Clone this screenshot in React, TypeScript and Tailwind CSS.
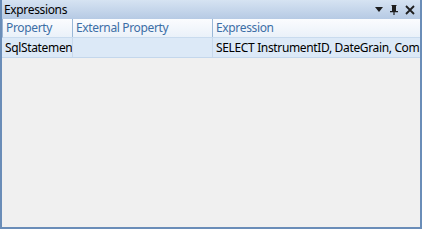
import React from 'react';

const font = { fontFamily: '"Noto Sans", "Open Sans", sans-serif' };

export default function App() {
  return (
    <div
      className="w-[422px] h-[229px] flex flex-col bg-[#f0f0f0] border-2 border-t-0 border-[#6a8db8] overflow-hidden text-[12px] tracking-[-0.35px]"
      style={font}
    >
      {/* title bar */}
      <div className="h-[19px] flex items-center pl-[2px] pr-[5px] bg-gradient-to-b from-[#d6e3f2] to-[#b6cae4] text-black shrink-0">
        <span className="leading-none">Expressions</span>
        <div className="ml-auto flex items-center gap-[7px] text-[#1e1e1e]">
          <svg width="8" height="5" viewBox="0 0 8 5"><path d="M0 0h8L4 5z" fill="currentColor" /></svg>
          <svg width="8" height="10" viewBox="0 0 8 10">
            <path d="M1.5 0h5v1H6v5h2v1.2H4.6V10H3.4V7.2H0V6h2V1h-.5z" fill="currentColor" />
          </svg>
          <svg width="10" height="10" viewBox="0 0 10 10">
            <path d="M1 1l8 8M9 1L1 9" stroke="currentColor" strokeWidth="1.8" />
          </svg>
        </div>
      </div>

      {/* header row */}
      <div className="h-[19px] flex shrink-0 bg-gradient-to-b from-[#fbfcfe] to-[#eaf1f9] border-b border-[#c9dbee] text-[#3c6ea6] border-l border-l-[#9bb5d4]">
        <div className="w-[70px] flex items-center pl-[3px] border-r border-[#9ab8d8] whitespace-nowrap overflow-hidden">Property</div>
        <div className="w-[140px] flex items-center pl-[3px] border-r border-[#9ab8d8] whitespace-nowrap overflow-hidden">External Property</div>
        <div className="flex-1 flex items-center pl-[3px] whitespace-nowrap overflow-hidden">Expression</div>
      </div>

      {/* data row */}
      <div className="h-[20px] flex shrink-0 bg-[#dce9f7] border-b border-[#c4d7ec] text-black">
        <div className="w-[71px] flex items-center pl-[3px] border-r border-[#c8d9ec] whitespace-nowrap overflow-hidden">SqlStatement</div>
        <div className="w-[140px] flex items-center pl-[3px] border-r border-[#c8d9ec] whitespace-nowrap overflow-hidden"></div>
        <div className="flex-1 flex items-center pl-[3px] whitespace-nowrap overflow-hidden">SELECT InstrumentID, DateGrain, CompanyID</div>
      </div>

      <div className="flex-1" />
    </div>
  );
}
